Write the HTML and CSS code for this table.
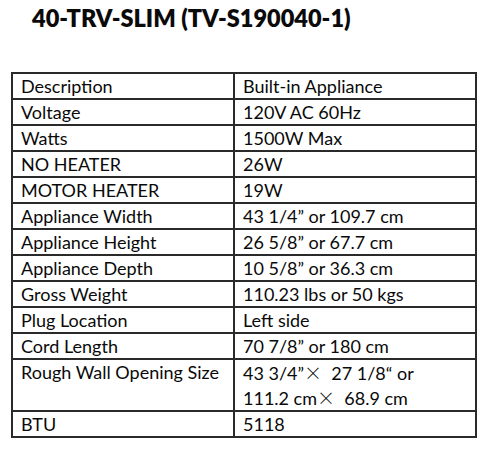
FILE: index.html
```html
<!DOCTYPE html>
<html>
<head>
<meta charset="utf-8">
<link rel="stylesheet" href="styles.css">
</head>
<body>
<h1 class="title">40-TRV-SLIM (TV-S190040-1)</h1>
<table class="spec">
  <colgroup><col class="c1"><col class="c2"></colgroup>
  <tr><td>Description</td><td>Built-in Appliance</td></tr>
  <tr><td>Voltage</td><td>120V AC 60Hz</td></tr>
  <tr><td>Watts</td><td>1500W Max</td></tr>
  <tr><td>NO HEATER</td><td>26W</td></tr>
  <tr><td>MOTOR HEATER</td><td>19W</td></tr>
  <tr><td>Appliance Width</td><td>43 1/4” or 109.7 cm</td></tr>
  <tr><td>Appliance Height</td><td>26 5/8” or 67.7 cm</td></tr>
  <tr><td>Appliance Depth</td><td>10 5/8” or 36.3 cm</td></tr>
  <tr><td>Gross Weight</td><td>110.23 lbs or 50 kgs</td></tr>
  <tr><td>Plug Location</td><td>Left side</td></tr>
  <tr><td>Cord Length</td><td>70 7/8” or 180 cm</td></tr>
  <tr><td>Rough Wall Opening Size</td><td>43 3/4”<span class="x">×</span>&nbsp; 27 1/8“ or<br>111.2 cm<span class="x">×</span>&nbsp; 68.9 cm</td></tr>
  <tr><td>BTU</td><td>5118</td></tr>
</table>
</body>
</html>
```
FILE: styles.css
```css
html, body {
  margin: 0;
  padding: 0;
  background: #fff;
}
body {
  font-family: "Lato", "Liberation Sans", sans-serif;
  color: #0a0a0a;
}
.title {
  margin: 0;
  padding: 3px 0 0 32px;
  font-size: 23.5px;
  line-height: 30px;
  font-weight: 800;
  height: 72px;
  box-sizing: border-box;
}
.spec {
  margin-left: 11px;
  width: 464px;
  border-collapse: collapse;
  table-layout: fixed;
  font-size: 18px;
}
.c1 { width: 222px; }
.c2 { width: 242px; }
.spec td {
  border: 2px solid #2a2a2a;
  padding: 0 0 0 8px;
  line-height: 24px;
  vertical-align: top;
  white-space: nowrap;
}
.x {
  font-family: "Noto Sans CJK SC", sans-serif;
  font-weight: 300;
}
```
